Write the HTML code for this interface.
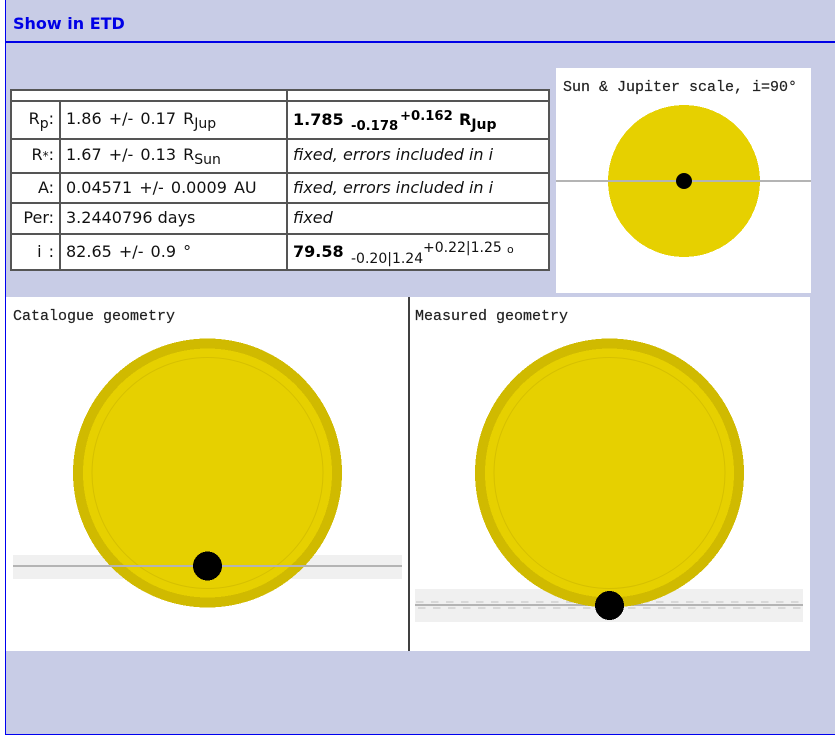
<!DOCTYPE html>
<html>
<head>
<meta charset="utf-8">
<style>
html,body{margin:0;padding:0;width:835px;height:737px;overflow:hidden;background:#fff}
#p{position:absolute;left:0;top:0;width:835px;height:737px;overflow:hidden;background:#fff}
#bg{position:absolute;left:5px;top:0;height:734px;background:#c8cce6;border-left:1px solid #0000f0;border-bottom:1px solid #0000f0;width:830px}
#hl{position:absolute;left:6px;top:41px;width:829px;height:2px;background:#0000e6}
#h{position:absolute;left:13px;top:14px;font:bold 16px/20px "DejaVu Sans",sans-serif;color:#0000e6;white-space:nowrap}
.ln{position:absolute;background:#555}
.cell{position:absolute;background:#fff}
.t{position:absolute;font:16px/20px "DejaVu Sans",sans-serif;color:#111;white-space:nowrap}
.w{word-spacing:2px}
.r{left:0;width:54px;text-align:right}
.s{position:absolute;font:14px/14px "DejaVu Sans",sans-serif;color:#111;white-space:nowrap}
.b{font-weight:bold;color:#000}
.sb{font-size:13.2px}
.d{font-size:14px;position:relative;top:4px}
i{font-style:italic}
svg{position:absolute;left:0;top:0}
.m{font-family:"Liberation Mono",monospace;font-size:15px;fill:#222;stroke:#222;stroke-width:.2}
.c{shape-rendering:crispEdges}
</style>
</head>
<body>
<div id="p">
<div id="bg"></div>
<div id="hl"></div>
<div id="h">Show in ETD</div>

<div class="cell" style="left:10px;top:89px;width:540px;height:182px"></div>
<div class="ln" style="left:10px;top:89px;width:540px;height:2px"></div>
<div class="ln" style="left:10px;top:100px;width:540px;height:2px"></div>
<div class="ln" style="left:10px;top:138px;width:540px;height:2px"></div>
<div class="ln" style="left:10px;top:172px;width:540px;height:2px"></div>
<div class="ln" style="left:10px;top:202px;width:540px;height:2px"></div>
<div class="ln" style="left:10px;top:233px;width:540px;height:2px"></div>
<div class="ln" style="left:10px;top:269px;width:540px;height:2px"></div>
<div class="ln" style="left:10px;top:89px;width:2px;height:182px"></div>
<div class="ln" style="left:286px;top:89px;width:2px;height:182px"></div>
<div class="ln" style="left:548px;top:89px;width:2px;height:182px"></div>
<div class="ln" style="left:59px;top:100px;width:2px;height:171px"></div>

<div class="t r" style="top:109px">R<span class="d">p</span>:</div>
<div class="t w" style="left:66px;top:109px">1.86 +/- 0.17 R<span class="d" style="word-spacing:0">Jup</span></div>
<div class="t r" style="top:145px">R<span style="font-size:12px">*</span>:</div>
<div class="t w" style="left:66px;top:145px">1.67 +/- 0.13 R<span class="d">Sun</span></div>
<div class="t r" style="top:178px">A:</div>
<div class="t w" style="left:66px;top:178px">0.04571 +/- 0.0009 AU</div>
<div class="t r" style="top:208px">Per:</div>
<div class="t" style="left:66px;top:208px">3.2440796 days</div>
<div class="t r w" style="top:242px">i :</div>
<div class="t w" style="left:66px;top:242px">82.65 +/- 0.9 °</div>

<div class="t b" style="left:293px;top:110px">1.785</div>
<div class="s b sb" style="left:351px;top:120px">-0.178</div>
<div class="s b sb" style="left:400px;top:110px">+0.162</div>
<div class="t b" style="left:459px;top:110px">R<span class="d">Jup</span></div>
<div class="t" style="left:293px;top:145px"><i>fixed, errors included in i</i></div>
<div class="t" style="left:293px;top:178px"><i>fixed, errors included in i</i></div>
<div class="t" style="left:293px;top:208px"><i>fixed</i></div>
<div class="t b" style="left:293px;top:242px">79.58</div>
<div class="s" style="left:351px;top:252px">-0.20|1.24</div>
<div class="s" style="left:423px;top:241px">+0.22|1.25</div>
<div class="s" style="left:507px;top:243px;font-size:11px">o</div>

<svg width="835" height="737" viewBox="0 0 835 737">
  <rect x="556" y="68" width="255" height="225" fill="#fff"/>
  <text x="563" y="91" class="m">Sun &amp; Jupiter scale, i=90°</text>
  <circle class="c" cx="684" cy="181" r="76" fill="#e6d000"/>
  <rect x="556" y="180" width="255" height="2" fill="#b4b4b4"/>
  <circle cx="684" cy="181" r="8" fill="#000"/>

  <rect x="6" y="297" width="804" height="354" fill="#fff"/>
  <rect x="408" y="297" width="2" height="354" fill="#404040"/>
  <text x="13" y="320" class="m">Catalogue geometry</text>
  <text x="415" y="320" class="m">Measured geometry</text>

  <rect x="13" y="555" width="389" height="24" fill="#f0f0f0"/>
  <circle class="c" cx="207.5" cy="473" r="134.5" fill="#d0ba00"/>
  <circle class="c" cx="207.5" cy="473" r="124.5" fill="#e6d000"/>
  <circle cx="207.5" cy="473" r="115.5" fill="none" stroke="#d6c000" stroke-width="1"/>
  <rect x="13" y="565" width="389" height="2" fill="#b4b4b4"/>
  <circle class="c" cx="207.5" cy="566" r="14.5" fill="#000"/>

  <rect x="415" y="589" width="388" height="33" fill="#f0f0f0"/>
  <line x1="416" y1="602" x2="803" y2="602" stroke="#d0d0d0" stroke-width="1.4" stroke-dasharray="7.5 7.5"/>
  <rect x="415" y="604" width="388" height="2" fill="#b4b4b4"/>
  <line x1="418" y1="608" x2="803" y2="608" stroke="#d0d0d0" stroke-width="1.4" stroke-dasharray="7.5 7.5"/>
  <circle class="c" cx="609.5" cy="473" r="134.5" fill="#d0ba00"/>
  <circle class="c" cx="609.5" cy="473" r="124.5" fill="#e6d000"/>
  <circle cx="609.5" cy="473" r="115.5" fill="none" stroke="#d6c000" stroke-width="1"/>
  <circle class="c" cx="609.5" cy="605.5" r="14.5" fill="#000"/>
</svg>
</div>
</body>
</html>
